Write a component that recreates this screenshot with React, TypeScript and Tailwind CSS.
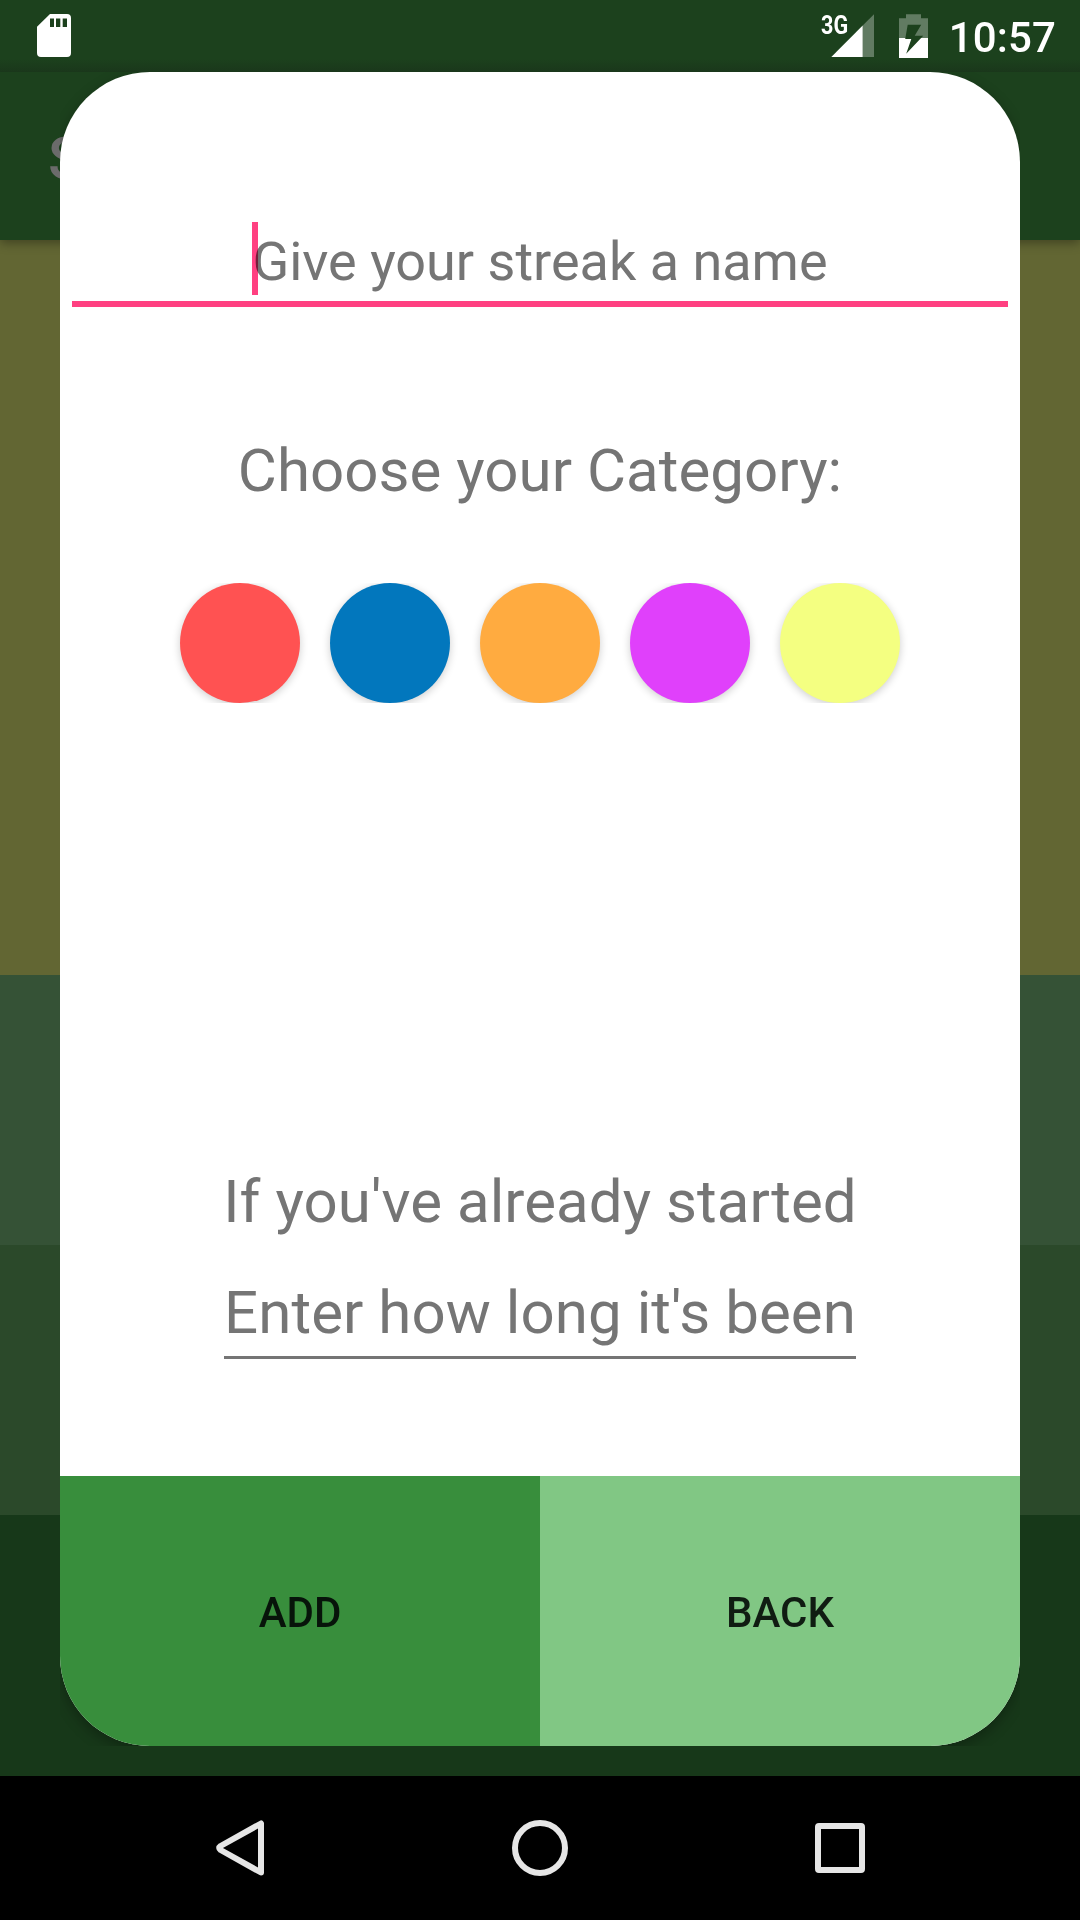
const categories = [
  { name: 'Red', color: 'bg-[#ff5252]' },
  { name: 'Blue', color: 'bg-[#0277bd]' },
  { name: 'Orange', color: 'bg-[#ffab40]' },
  { name: 'Purple', color: 'bg-[#e040fb]' },
  { name: 'Yellow', color: 'bg-[#f4ff81]' },
];

function SdCardIcon() {
  return (
    <svg width="34" height="43" viewBox="37 14.5 34 43" className="block">
      <path
        fillRule="evenodd"
        fill="#fff"
        d="M50 14.5H67Q71 14.5 71 18.5V53.5Q71 57.5 67 57.5H41Q37 57.5 37 53.5V27.3ZM50 19V27.5H54V19ZM56 19V27.5H60.3V19ZM62.7 19V27.5H67V19Z"
      />
    </svg>
  );
}

function SignalIcon() {
  return (
    <svg width="43" height="43" viewBox="831 14 43 43" className="block">
      <path d="M862.7 25.5L874 14.3V57H862.7Z" fill="#617b62" />
      <path d="M831.3 57L862.7 25.5V57Z" fill="#fff" />
    </svg>
  );
}

function BatteryIcon() {
  return (
    <svg width="29" height="44" viewBox="899 14 29 44" className="block">
      <path d="M906 14.3H921V18.3H928V38H899V18.3H906Z" fill="#617b62" />
      <path d="M899 38H928V58H899Z" fill="#fff" />
      <path d="M907.7 24.7H921.2L914.7 35.7H923.2L906.2 53.7L911.3 39H905.2Z" fill="#1c411d" />
    </svg>
  );
}

function StatusBar() {
  return (
    <header className="flex h-[72px] items-start bg-[linear-gradient(#1c411d_0px,#1c411d_59px,#1a371b_72px)] pl-[37px] pr-[24px] pt-[14px] text-white">
      <SdCardIcon />
      <div className="ml-auto flex items-start">
        <span className="-mr-[17px] h-[24px] w-[27px] origin-left scale-x-[0.83] whitespace-nowrap text-[26px] font-bold leading-[22px]">
          3G
        </span>
        <SignalIcon />
        <div className="ml-[25px]">
          <BatteryIcon />
        </div>
        <span className="mt-[-1px] pl-[21px] text-[42px] font-medium leading-[49px] tracking-[0.15px]">10:57</span>
      </div>
    </header>
  );
}

function NewStreakDialog() {
  return (
    <div className="absolute left-[60px] top-[72px] h-[1674px] w-[960px] overflow-hidden">
      <section className="relative flex h-full flex-col items-center overflow-hidden rounded-[90px] bg-white text-[60px] leading-[70px] text-[#757575] shadow-[0_5px_14px_rgba(0,0,0,0.3)]">
        <div className="relative mt-[150px] flex h-[85px] w-[936px] justify-center border-b-[6px] border-[#ff4081] pt-[8px]">
          <span className="whitespace-nowrap text-[54px] leading-[64px]">Give your streak a name</span>
          <i className="absolute left-[180px] top-0 h-[73px] w-[6px] bg-[#ff4081] mix-blend-multiply" />
        </div>
        <h2 className="mt-[129px] whitespace-nowrap tracking-[0.04px]">Choose your Category:</h2>
        <div className="mt-[77px] flex h-[120px] w-[960px] justify-center gap-[30px] [clip-path:inset(0)]">
          {categories.map((c) => (
            <button
              key={c.name}
              aria-label={c.name}
              className={`size-[120px] rounded-full shadow-[0_2px_8px_rgba(0,0,0,0.2)] ${c.color}`}
            />
          ))}
        </div>
        <p className="mt-[464px] whitespace-nowrap tracking-[0.06px]">If you've already started</p>
        <div className="mt-[41px] flex h-[81px] w-[632px] justify-center whitespace-nowrap border-b-[3px] border-[#757575] tracking-[0.06px]">
          Enter how long it's been
        </div>
        <div className="mt-auto grid h-[270px] w-full grid-cols-2 text-[42px] font-medium leading-[49px]">
          <button className="bg-[#388e3c] pt-[2px] text-[#07140a]">ADD</button>
          <button className="bg-[#81c784] pt-[2px] text-[#101c12]">BACK</button>
        </div>
      </section>
    </div>
  );
}

function NavigationBar() {
  return (
    <nav className="h-[144px] bg-black">
      <svg width="1080" height="144" viewBox="0 1776 1080 144" fill="none" stroke="#e6e6e6" strokeWidth="6" className="block">
        <path d="M261 1823.5V1872.5L220.6 1850Q217.8 1848 220.6 1846Z" strokeLinejoin="round" />
        <circle cx="540" cy="1848" r="25" />
        <rect x="818" y="1826" width="44" height="44" rx="1" />
      </svg>
    </nav>
  );
}

export default function App() {
  return (
    <main className="relative flex h-[1920px] w-[1080px] flex-col overflow-hidden bg-black font-['Roboto',sans-serif]">
      <StatusBar />
      <div className="relative h-[168px] bg-[#1c411d] pl-[48px] pt-[52px] text-[60px] font-medium leading-[70px] text-[#6b6b6b] shadow-[0_3px_10px_rgba(0,0,0,0.35)] [clip-path:inset(0_0_-20px_0)]">
        S
      </div>
      <div className="h-[735px] bg-[#626633]" />
      <div className="h-[270px] bg-[#355236]" />
      <div className="h-[270px] bg-[#2b492a]" />
      <div className="h-[261px] bg-[#173819]" />
      <NavigationBar />
      <NewStreakDialog />
    </main>
  );
}
